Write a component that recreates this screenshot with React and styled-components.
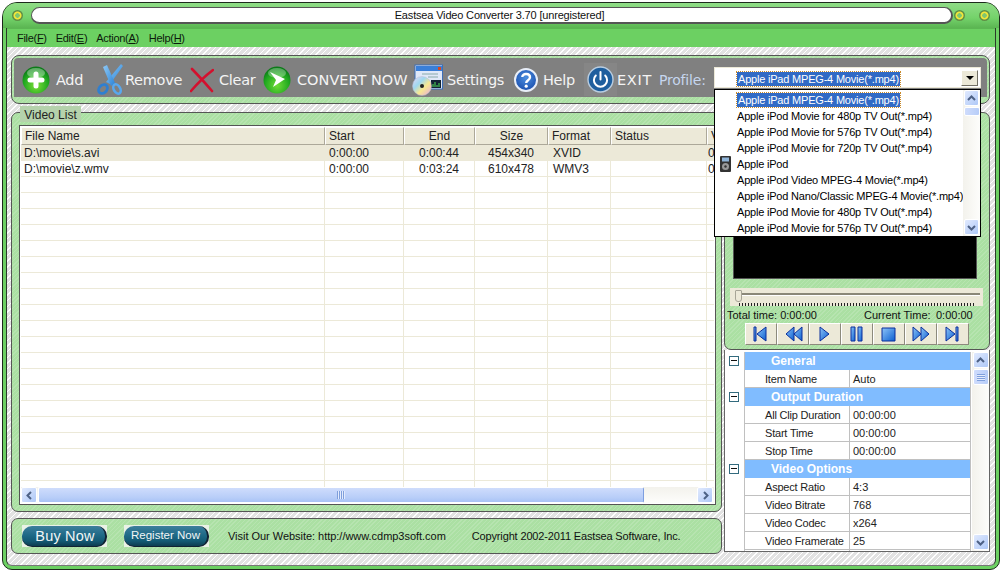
import React from 'react';
import styled, { createGlobalStyle } from 'styled-components';

const GlobalStyle = createGlobalStyle`
  html, body {
    margin: 0;
    padding: 0;
    background: #fff;
  }
  body {
    font-family: 'Liberation Sans', Arial, sans-serif;
    font-size: 11px;
    color: #000;
  }
  * {
    box-sizing: border-box;
  }
`;

const GREEN_TEXTURE = `
  repeating-linear-gradient(135deg, rgba(255,255,255,.14) 0 1px, transparent 1px 3px),
  #abe0a3
`;

const Page = styled.div`
  width: 1002px;
  height: 574px;
  padding: 2px 2px 4px;
  overflow: hidden;
`;

const Frame = styled.div`
  height: 100%;
  display: flex;
  flex-direction: column;
  background: #6cd062;
  border: 1px solid #1d2a1c;
  border-radius: 15px 15px 10px 10px;
  padding: 0 3px 3px;
`;

const TitleBar = styled.div`
  height: 25px;
  flex: none;
  display: flex;
  align-items: center;
  padding: 0 6px 1px 9px;
  background: linear-gradient(#8fdc86, #74d26a 60%, #5bb552);
  margin: 0 -3px;
  border-radius: 14px 14px 0 0;
`;

const Knob = styled.span`
  width: 11px;
  height: 11px;
  flex: none;
  border-radius: 50%;
  background: radial-gradient(circle, #7fc76f 0 2px, #f2e63a 2.5px 3.5px, #5f8f45 4.5px);
  margin-left: ${({ $left }) => $left || 0}px;
`;

const TitlePill = styled.div`
  width: 922px;
  height: 17px;
  margin-left: 8px;
  padding-left: 16px;
  flex: none;
  background: #fff;
  border: 1px solid #555;
  border-right-width: 2px;
  border-bottom-width: 2px;
  border-radius: 9px;
  text-align: center;
  line-height: 15px;
  letter-spacing: -0.17px;
  color: #111;
`;

const Body = styled.div`
  flex: 1;
  min-height: 0;
  display: flex;
  flex-direction: column;
  border: 1px solid #2c3a2b;
  border-bottom-color: #777;
  border-radius: 0 0 6px 6px;
  background:
    repeating-linear-gradient(135deg, #fff 0 1px, transparent 1px 4px),
    #e2e2e2;
`;

const MenuBar = styled.div`
  height: 19px;
  flex: none;
  display: flex;
  align-items: center;
  background: #6cd062;
  border-top: 1px solid #5cb653;
  padding-left: 10px;
  color: #0c1a0c;
  margin-top: -1px;
  letter-spacing: -0.3px;
`;

const MenuItem = styled.span`
  margin-right: ${({ $gap }) => $gap}px;
`;

const Content = styled.div`
  position: relative;
  flex: 1;
  min-height: 0;
  padding: 8px 5px 0 4px;
  display: flex;
  flex-direction: column;
  gap: 8px;
`;

const Toolbar = styled.div`
  height: 49px;
  flex: none;
  background: ${GREEN_TEXTURE};
  border: 1px solid #555;
  border-radius: 8px;
  padding: 2px 2px 6px 2px;
`;

const ToolbarInner = styled.div`
  height: 100%;
  background: #808080;
  border-radius: 4px 4px 0 0;
  display: flex;
  align-items: center;
  padding: 4px 0 0 8px;
`;

const ToolButton = styled.div`
  display: flex;
  align-items: center;
  width: ${({ $width }) => $width}px;
  flex: none;
`;

const ToolLabel = styled.span`
  font-family: 'DejaVu Sans', Verdana, sans-serif;
  font-size: 14.5px;
  color: #f4f4f4;
  margin-left: ${({ $gap }) => $gap}px;
  white-space: nowrap;
  letter-spacing: ${({ $track }) => $track}px;
`;

const ProfileLabel = styled(ToolLabel)`
  color: #c6d6ee;
  font-size: 14px;
  width: 55px;
  flex: none;
  margin-left: 0;
  letter-spacing: -0.2px;
`;

const ExitBox = styled.div`
  display: flex;
  background: #868686;
  padding: 3px;
  margin: -3px;
`;

const Combo = styled.div`
  width: 267px;
  height: 21px;
  margin-top: -4px;
  flex: none;
  background: #fff;
  border: 1px solid #ece9d8;
  display: flex;
  align-items: center;
  padding: 3px 0 0 22px;
  position: relative;
  letter-spacing: -0.2px;
`;

const SelectedText = styled.span`
  background: #316ac5;
  color: #fff;
  line-height: 14px;
  padding: 0 1px;
  outline: 1px dotted #c98a2a;
  outline-offset: 0;
`;

const ComboArrow = styled.div`
  position: absolute;
  right: 2px;
  top: 2px;
  width: 17px;
  height: 16px;
  background: #ece9d8;
  border: 1px solid;
  border-color: #fff #716f64 #716f64 #fff;
  display: flex;
  align-items: center;
  justify-content: center;
  &::before {
    content: '';
    border: 4px solid transparent;
    border-top: 4px solid #000;
    border-bottom: 0;
  }
`;

const DropList = styled.div`
  position: absolute;
  left: 707px;
  top: 42px;
  width: 267px;
  height: 148px;
  background: #fff;
  border: 1px solid #000;
  z-index: 5;
  display: flex;
  letter-spacing: -0.2px;
`;

const DropItems = styled.div`
  flex: 1;
  overflow: hidden;
  padding-top: 2px;
`;

const DropRow = styled.div`
  height: 16px;
  display: flex;
  align-items: center;
  padding-left: 22px;
  position: relative;
  white-space: nowrap;
`;

const DropIcon = styled.svg`
  position: absolute;
  left: 5px;
  top: 0;
`;

const Columns = styled.div`
  flex: 1;
  min-height: 0;
  display: flex;
  gap: 2px;
`;

const LeftColumn = styled.div`
  width: 711px;
  flex: none;
  display: flex;
  flex-direction: column;
  gap: 6px;
`;

const RightColumn = styled.div`
  width: 266px;
  flex: none;
  display: flex;
  flex-direction: column;
`;

const ListPanel = styled.div`
  position: relative;
  height: 400px;
  flex: none;
  background: ${GREEN_TEXTURE};
  border: 1px solid #555;
  border-radius: 7px;
  padding: 12px 5px 0 7px;
`;

const Legend = styled.div`
  position: absolute;
  left: 8px;
  top: -7px;
  height: 16px;
  width: 61px;
  background: #b5d2ac;
  text-align: center;
  line-height: 18px;
  font-size: 12px;
  color: #222;
`;

const ListBox = styled.div`
  height: 380px;
  display: flex;
  flex-direction: column;
  background: #fff;
  border: 1px solid #555;
  padding: 1px;
  overflow: hidden;
`;

const Row = styled.div`
  display: grid;
  grid-template-columns: 304px 79px 71px 73px 63px 96px 40px;
  flex: none;
  height: ${({ $head }) => ($head ? 18 : 16)}px;
  background: ${({ $active }) => ($active ? '#ece9d8' : 'transparent')};
  border-bottom: ${({ $head }) => ($head ? '0' : '1px solid #ece9d8')};
`;

const HeadCell = styled.div`
  background: #ece9d8;
  border: 1px solid;
  border-color: #fff #aca899 #aca899 #fff;
  line-height: 17px;
  padding: 0 ${({ $center }) => ($center ? 0 : 3)}px;
  text-align: ${({ $center }) => ($center ? 'center' : 'left')};
  white-space: nowrap;
  overflow: hidden;
  font-size: 12px;
  color: #222;
`;

const Cell = styled.div`
  border-right: 1px solid #ece9d8;
  line-height: 15px;
  padding: 1px ${({ $pad }) => $pad}px 0;
  text-align: ${({ $center }) => ($center ? 'center' : 'left')};
  white-space: nowrap;
  overflow: hidden;
  font-size: 12px;
  color: #222;
`;

const RowArea = styled.div`
  flex: 1;
  min-height: 0;
  overflow: hidden;
`;

const HScroll = styled.div`
  height: 16px;
  flex: none;
  display: flex;
  background: linear-gradient(#f3f2ec, #fdfdfb);
  padding-right: 1px;
`;

const ScrollBtn = styled.div`
  width: ${({ $w }) => $w || 16}px;
  height: ${({ $h }) => $h || 16}px;
  flex: none;
  background: linear-gradient(135deg, #e1eafe, #aec8f7);
  border: 1px solid #fff;
  border-radius: 2px;
  display: flex;
  align-items: center;
  justify-content: center;
`;

const HThumb = styled.div`
  width: 606px;
  margin: 0 1px;
  background: linear-gradient(#cfdcfc, #b7cdf8 70%, #a9c2f5);
  border: 1px solid #fff;
  border-right-color: #7e9fe0;
  border-radius: 2px;
  display: flex;
  align-items: center;
  justify-content: center;
  flex: none;
`;

const HTrack = styled.div`
  flex: 1;
`;

const Footer = styled.div`
  height: 36px;
  flex: none;
  background: ${GREEN_TEXTURE};
  border: 1px solid #555;
  border-radius: 7px;
  display: flex;
  align-items: center;
  padding-left: 10px;
  color: #111;
`;

const PillWrap = styled.div`
  width: 85px;
  height: 22px;
  background: #e9f2e6;
  display: flex;
  align-items: center;
  justify-content: center;
  margin-right: ${({ $gap }) => $gap}px;
  flex: none;
`;

const Pill = styled.div`
  width: 85px;
  height: 21px;
  border-radius: 10px;
  background: linear-gradient(#3d7f9c, #1f6a87 45%, #135a74 75%, #0d3c50);
  border-right: 2px solid #123;
  border-bottom: 1px solid #123;
  color: #f2f6f6;
  text-align: center;
  padding-left: ${({ $big }) => ($big ? 3 : 0)}px;
  line-height: ${({ $big }) => ($big ? 21 : 18)}px;
  font-size: ${({ $big }) => ($big ? 14.5 : 11.5)}px;
  letter-spacing: ${({ $big }) => ($big ? 0.2 : 0)}px;
`;

const FooterText = styled.span`
  margin-right: ${({ $gap }) => $gap}px;
  white-space: nowrap;
  font-size: 11px;
  letter-spacing: ${({ $track }) => $track}px;
`;

const PreviewPanel = styled.div`
  height: 238px;
  flex: none;
  background: ${GREEN_TEXTURE};
  border: 1px solid #555;
  border-radius: 7px;
  padding: 12px 5px 0 5px;
  display: flex;
  flex-direction: column;
`;

const Screen = styled.div`
  height: 154px;
  margin: 0 7px 0 3px;
  flex: none;
  background: #000;
  border: 1px solid #555;
`;

const Slider = styled.div`
  position: relative;
  height: 18px;
  margin-top: 9px;
  background: #ece9d8;
  flex: none;
  width: 253px;
`;

const SliderTrack = styled.div`
  position: absolute;
  left: 5px;
  right: 3px;
  top: 5px;
  height: 3px;
  background: #8a8878;
  border-bottom: 1px solid #fff;
`;

const SliderTicks = styled.div`
  position: absolute;
  left: 9px;
  right: 8px;
  bottom: 0;
  height: 3px;
  background: repeating-linear-gradient(90deg, #222 0 1px, transparent 1px 3px);
`;

const SliderThumb = styled.div`
  position: absolute;
  left: 5px;
  top: 2px;
  width: 7px;
  height: 12px;
  background: #ece9d8;
  border: 1px solid #a7a597;
  border-radius: 1px 1px 3px 3px;
`;

const TimeRow = styled.div`
  display: flex;
  height: 14px;
  margin-top: 2px;
  flex: none;
  line-height: 14px;
  font-size: 11px;
  color: #111;
  margin-left: -3px;
`;

const TimeText = styled.span`
  width: ${({ $w }) => $w}px;
  white-space: nowrap;
`;

const MediaRow = styled.div`
  display: flex;
  margin: 1px 0 0 15px;
  flex: none;
`;

const MediaButton = styled.div`
  width: 32px;
  height: 22px;
  background: #ece9d8;
  border: 1px solid;
  border-color: #fff #8c8a7c #8c8a7c #fff;
  display: flex;
  align-items: center;
  justify-content: center;
`;

const PropPanel = styled.div`
  height: 202px;
  flex: none;
  display: flex;
  background: #fff;
  border: 1px solid #666;
  border-top: 0;
  padding: 2px 1px 0;
  overflow: hidden;
`;

const PropGutter = styled.div`
  width: 18px;
  flex: none;
`;

const GutterSlot = styled.div`
  height: 18px;
  display: flex;
  align-items: center;
  justify-content: center;
`;

const MinusBox = styled.div`
  width: 10px;
  height: 10px;
  border: 1px solid #336b7e;
  position: relative;
  margin-left: -2px;
  &::before {
    content: '';
    position: absolute;
    left: 1px;
    right: 1px;
    top: 3px;
    height: 1px;
    background: #111;
  }
`;

const PropGrid = styled.div`
  width: 227px;
  flex: none;
  display: flex;
  flex-direction: column;
  border-left: 1px solid #c0c0c0;
  border-right: 1px solid #c0c0c0;
`;

const SectionRow = styled.div`
  height: 18px;
  flex: none;
  background: #80bcff;
  color: #fff;
  font-weight: 700;
  line-height: 19px;
  padding-left: 26px;
  font-size: 12px;
`;

const PropRow = styled.div`
  height: 18px;
  flex: none;
  display: grid;
  grid-template-columns: 105px 1fr;
  border-bottom: 1px solid #c0c0c0;
  line-height: 19px;
  font-size: 11px;
  color: #222;
`;

const PropName = styled.div`
  padding-left: 20px;
  border-right: 1px solid #c0c0c0;
  white-space: nowrap;
  overflow: hidden;
  letter-spacing: -0.2px;
`;

const PropValue = styled.div`
  padding-left: 3px;
`;

const VScroll = styled.div`
  width: 17px;
  margin-left: 1px;
  flex: none;
  display: flex;
  flex-direction: column;
  align-items: center;
  background: linear-gradient(90deg, #f3f2ec, #fdfdfb);
  padding-bottom: 1px;
`;

const VThumb = styled.div`
  width: 16px;
  height: ${({ $h }) => $h}px;
  margin-top: 1px;
  background: linear-gradient(90deg, #cfdcfc, #b7cdf8);
  border: 1px solid #fff;
  border-radius: 2px;
  display: flex;
  align-items: center;
  justify-content: center;
`;

const VSpacer = styled.div`
  flex: 1;
`;

const Grip = styled.div`
  width: 8px;
  height: 7px;
  background: repeating-linear-gradient(#7f9fdc 0 1px, #e4ecfd 1px 2px);
`;

const HGrip = styled.div`
  width: 8px;
  height: 8px;
  background: repeating-linear-gradient(90deg, #7f9fdc 0 1px, #e4ecfd 1px 2px);
`;

const DropScroll = styled(VScroll)`
  width: 17px;
  margin: 0;
`;

function Chevron({ dir }) {
  const paths = {
    up: 'M2 7 L5.5 3.5 L9 7',
    down: 'M2 4 L5.5 7.5 L9 4',
    left: 'M7 2 L3.5 5.5 L7 9',
    right: 'M4 2 L7.5 5.5 L4 9',
  };
  return (
    <svg width="11" height="11" viewBox="0 0 11 11">
      <path d={paths[dir]} fill="none" stroke="#4d6185" strokeWidth="2" />
    </svg>
  );
}

function AddIcon() {
  return (
    <svg width="28" height="28" viewBox="0 0 28 28">
      <defs>
        <radialGradient id="addG" cx="50%" cy="70%" r="65%">
          <stop offset="0" stopColor="#7fe03a" />
          <stop offset="0.7" stopColor="#1fa81f" />
          <stop offset="1" stopColor="#0c7a18" />
        </radialGradient>
      </defs>
      <circle cx="14" cy="14" r="13.5" fill="url(#addG)" />
      <ellipse cx="14" cy="7" rx="9" ry="5" fill="#fff" opacity="0.35" />
      <path d="M14 8 V20 M8 14 H20" stroke="#fff" strokeWidth="5" strokeLinecap="round" />
    </svg>
  );
}

function ScissorsIcon() {
  return (
    <svg width="27" height="31" viewBox="0 0 27 31">
      <defs>
        <linearGradient id="bladeG" x1="0" y1="0" x2="1" y2="1">
          <stop offset="0" stopColor="#8fcaf6" />
          <stop offset="1" stopColor="#2a83d8" />
        </linearGradient>
      </defs>
      <path d="M24 0 L26 2 L13 20 L9 18 Z" fill="url(#bladeG)" />
      <path d="M6 3 L10 1 L18 19 L14 22 Z" fill="url(#bladeG)" />
      <ellipse cx="6" cy="25" rx="5" ry="3.8" transform="rotate(-45 6 25)" fill="none" stroke="#2f7fd0" strokeWidth="2.8" />
      <ellipse cx="20" cy="25" rx="3.2" ry="5" transform="rotate(-30 20 25)" fill="none" stroke="#58a8ee" strokeWidth="2.6" />
    </svg>
  );
}

function ClearIcon() {
  return (
    <svg width="24" height="26" viewBox="0 0 24 26">
      <path d="M2 2 C8 8 16 17 22 24 M23 3 C15 9 7 17 1 24" fill="none" stroke="#d3102e" strokeWidth="2.6" strokeLinecap="round" />
    </svg>
  );
}

function ConvertIcon() {
  return (
    <svg width="28" height="28" viewBox="0 0 28 28">
      <defs>
        <radialGradient id="convG" cx="50%" cy="70%" r="65%">
          <stop offset="0" stopColor="#70dc38" />
          <stop offset="0.7" stopColor="#1fa81f" />
          <stop offset="1" stopColor="#0c7a18" />
        </radialGradient>
      </defs>
      <circle cx="14" cy="14" r="13.5" fill="url(#convG)" />
      <ellipse cx="14" cy="7" rx="9" ry="5" fill="#fff" opacity="0.3" />
      <path d="M7 6 L22 13 L10 21 L13 14 Z" fill="#fff" />
    </svg>
  );
}

function SettingsIcon() {
  return (
    <svg width="31" height="32" viewBox="0 0 31 32">
      <defs>
        <linearGradient id="cdG" x1="0" y1="0" x2="1" y2="1">
          <stop offset="0" stopColor="#e8d8f8" />
          <stop offset="0.35" stopColor="#9fd8f0" />
          <stop offset="0.6" stopColor="#f8e890" />
          <stop offset="1" stopColor="#e6a8e0" />
        </linearGradient>
      </defs>
      <rect x="3" y="1" width="27.5" height="24" fill="#dfe8f8" stroke="#3d6fb8" />
      <rect x="4" y="2" width="26" height="5" fill="#3a7fd8" />
      <rect x="26" y="3" width="3" height="3" fill="#d84a20" />
      <rect x="19" y="16" width="10" height="8" fill="#123" />
      <path d="M21 23 V20 M23 23 V18 M25 23 V21 M27 23 V19" stroke="#4fe05a" />
      <path d="M10 10 H26 M16 13 H26" stroke="#8aa" />
      <circle cx="10" cy="22" r="9.5" fill="url(#cdG)" stroke="#b8b8d0" strokeWidth="0.5" />
      <circle cx="10" cy="22" r="2" fill="#222" />
    </svg>
  );
}

function HelpIcon() {
  return (
    <svg width="24" height="24" viewBox="0 0 24 24">
      <defs>
        <radialGradient id="helpG" cx="50%" cy="40%" r="60%">
          <stop offset="0" stopColor="#4c8fe0" />
          <stop offset="1" stopColor="#1a4fae" />
        </radialGradient>
      </defs>
      <circle cx="12" cy="12" r="11" fill="url(#helpG)" stroke="#e8eef8" strokeWidth="2" />
      <path d="M8.3 9 C8.3 4.8 16 5 16 9.3 C16 12.3 12.2 12 12.2 15" fill="none" stroke="#fff" strokeWidth="2.4" />
      <circle cx="12.2" cy="18.2" r="1.6" fill="#fff" />
    </svg>
  );
}

function ExitIcon() {
  return (
    <ExitBox>
      <svg width="27" height="27" viewBox="0 0 27 27">
        <circle cx="13.5" cy="13.5" r="12.5" fill="#1f5f9e" stroke="#b9cde0" strokeWidth="1.4" />
        <path d="M8.8 9.5 A6.6 6.6 0 1 0 18.2 9.5" fill="none" stroke="#fff" strokeWidth="2" strokeLinecap="round" />
        <path d="M13.5 6 V13.5" stroke="#fff" strokeWidth="2" strokeLinecap="round" />
      </svg>
    </ExitBox>
  );
}

function IpodIcon() {
  return (
    <DropIcon width="11" height="16" viewBox="0 0 11 16">
      <rect x="0" y="0" width="11" height="16" rx="1" fill="#333" />
      <rect x="2" y="1.5" width="7" height="4" fill="#8fb4d8" />
      <circle cx="5.5" cy="10.5" r="3.5" fill="#999" />
      <circle cx="5.5" cy="10.5" r="1.2" fill="#333" />
    </DropIcon>
  );
}

const MEDIA_PATHS = {
  first: ['M3 2 V16 H5 V2 Z', 'M15 2 V16 L6 9 Z'],
  prev: ['M11 2 V16 L3 9 Z', 'M19 2 V16 L11 9 Z'],
  play: ['M5 2 L14 9 L5 16 Z'],
  pause: ['M4 2 H8 V16 H4 Z', 'M11 2 H15 V16 H11 Z'],
  stop: ['M3 3 H16 V16 H3 Z'],
  next: ['M2 2 L10 9 L2 16 Z', 'M10 2 L18 9 L10 16 Z'],
  last: ['M3 2 L12 9 L3 16 Z', 'M13 2 H15 V16 H13 Z'],
};

function MediaIcon({ name }) {
  return (
    <svg width="20" height="18" viewBox="0 0 20 18">
      <defs>
        <linearGradient id={`media-${name}`} x1="0" y1="0" x2="1" y2="1">
          <stop offset="0" stopColor="#8ec4f8" />
          <stop offset="1" stopColor="#0b5fd0" />
        </linearGradient>
      </defs>
      {MEDIA_PATHS[name].map((d) => (
        <path key={d} d={d} fill={`url(#media-${name})`} stroke="#0a2f9c" strokeWidth="1" />
      ))}
    </svg>
  );
}

const menus = [
  { label: 'File', key: 'F', gap: 9 },
  { label: 'Edit', key: 'E', gap: 9 },
  { label: 'Action', key: 'A', gap: 10 },
  { label: 'Help', key: 'H', gap: 0 },
];

const tools = [
  { label: 'Add', icon: <AddIcon />, labelGap: 6, width: 75, track: -0.3 },
  { label: 'Remove', icon: <ScissorsIcon />, labelGap: 1, width: 93, track: -0.3 },
  { label: 'Clear', icon: <ClearIcon />, labelGap: 5, width: 73, track: -0.3 },
  { label: 'CONVERT NOW', icon: <ConvertIcon />, labelGap: 6, width: 149, track: 0 },
  { label: 'Settings', icon: <SettingsIcon />, labelGap: 4, width: 102, track: -0.3 },
  { label: 'Help', icon: <HelpIcon />, labelGap: 5, width: 73, track: -0.3 },
  { label: 'EXIT', icon: <ExitIcon />, labelGap: 3, width: 72, track: 0.7 },
];

const profiles = [
  'Apple iPad MPEG-4 Movie(*.mp4)',
  'Apple iPod Movie for 480p TV Out(*.mp4)',
  'Apple iPod Movie for 576p TV Out(*.mp4)',
  'Apple iPod Movie for 720p TV Out(*.mp4)',
  'Apple iPod',
  'Apple iPod Video MPEG-4 Movie(*.mp4)',
  'Apple iPod Nano/Classic MPEG-4 Movie(*.mp4)',
  'Apple iPod Movie for 480p TV Out(*.mp4)',
  'Apple iPod Movie for 576p TV Out(*.mp4)',
];

const videos = [
  ['D:\\movie\\s.avi', '0:00:00', '0:00:44', '454x340', 'XVID', '', '0'],
  ['D:\\movie\\z.wmv', '0:00:00', '0:03:24', '610x478', 'WMV3', '', '0'],
];

const columns = [
  { title: 'File Name', pad: 3 },
  { title: 'Start', pad: 4 },
  { title: 'End', center: true },
  { title: 'Size', center: true },
  { title: 'Format', pad: 5 },
  { title: 'Status', pad: 5 },
  { title: 'V', pad: 1 },
];

const properties = [
  { section: 'General' },
  { name: 'Item Name', value: 'Auto' },
  { section: 'Output Duration' },
  { name: 'All Clip Duration', value: '00:00:00' },
  { name: 'Start Time', value: '00:00:00' },
  { name: 'Stop Time', value: '00:00:00' },
  { section: 'Video Options' },
  { name: 'Aspect Ratio', value: '4:3' },
  { name: 'Video Bitrate', value: '768' },
  { name: 'Video Codec', value: 'x264' },
  { name: 'Video Framerate', value: '25' },
];

const emptyRows = Array.from({ length: 20 }, (_, i) => i);

export default function App() {
  return (
    <Page>
      <GlobalStyle />
      <Frame>
        <TitleBar>
          <Knob />
          <TitlePill>Eastsea Video Converter 3.70 [unregistered]</TitlePill>
          <Knob $left={1} />
          <Knob $left={14} />
        </TitleBar>
        <Body>
          <MenuBar>
            {menus.map((m) => (
              <MenuItem key={m.label} $gap={m.gap}>
                {m.label}(<u>{m.key}</u>)
              </MenuItem>
            ))}
          </MenuBar>
          <Content>
            <Toolbar>
              <ToolbarInner>
                {tools.map((t) => (
                  <ToolButton key={t.label} $width={t.width}>
                    {t.icon}
                    <ToolLabel $gap={t.labelGap} $track={t.track}>{t.label}</ToolLabel>
                  </ToolButton>
                ))}
                <ProfileLabel>Profile:</ProfileLabel>
                <Combo>
                  <SelectedText>{profiles[0]}</SelectedText>
                  <ComboArrow />
                </Combo>
              </ToolbarInner>
            </Toolbar>
            <DropList>
              <DropItems>
                {profiles.map((p, i) => (
                  <DropRow key={`${p}-${i}`}>
                    {p === 'Apple iPod' && <IpodIcon />}
                    {i === 0 ? <SelectedText>{p}</SelectedText> : p}
                  </DropRow>
                ))}
              </DropItems>
              <DropScroll>
                <ScrollBtn $w={15} $h={16}><Chevron dir="up" /></ScrollBtn>
                <VThumb $h={9} />
                <VSpacer />
                <ScrollBtn $w={15} $h={16}><Chevron dir="down" /></ScrollBtn>
              </DropScroll>
            </DropList>
            <Columns>
              <LeftColumn>
                <ListPanel>
                  <Legend>Video List</Legend>
                  <ListBox>
                    <Row $head>
                      {columns.map((c) => (
                        <HeadCell key={c.title} $center={c.center}>{c.title}</HeadCell>
                      ))}
                    </Row>
                    <RowArea>
                      {videos.map((v, i) => (
                        <Row key={v[0]} $active={i === 0}>
                          {v.map((text, j) => (
                            <Cell key={columns[j].title} $pad={columns[j].pad || 0} $center={columns[j].center}>
                              {text}
                            </Cell>
                          ))}
                        </Row>
                      ))}
                      {emptyRows.map((r) => (
                        <Row key={r}>
                          {columns.map((c) => (
                            <Cell key={c.title} $pad={0} />
                          ))}
                        </Row>
                      ))}
                    </RowArea>
                    <HScroll>
                      <ScrollBtn><Chevron dir="left" /></ScrollBtn>
                      <HThumb><HGrip /></HThumb>
                      <HTrack />
                      <ScrollBtn><Chevron dir="right" /></ScrollBtn>
                    </HScroll>
                  </ListBox>
                </ListPanel>
                <Footer>
                  <PillWrap $gap={17}><Pill $big>Buy Now</Pill></PillWrap>
                  <PillWrap $gap={19}><Pill>Register Now</Pill></PillWrap>
                  <FooterText $gap={26} $track={-0.03}>Visit Our Website: http://www.cdmp3soft.com</FooterText>
                  <FooterText $gap={0} $track={-0.15}>Copyright 2002-2011 Eastsea Software, Inc.</FooterText>
                </Footer>
              </LeftColumn>
              <RightColumn>
                <PreviewPanel>
                  <Screen />
                  <Slider>
                    <SliderTrack />
                    <SliderTicks />
                    <SliderThumb />
                  </Slider>
                  <TimeRow>
                    <TimeText $w={137}>Total time: 0:00:00</TimeText>
                    <TimeText $w={72}>Current Time:</TimeText>
                    <TimeText $w={40}>0:00:00</TimeText>
                  </TimeRow>
                  <MediaRow>
                    {Object.keys(MEDIA_PATHS).map((name) => (
                      <MediaButton key={name}><MediaIcon name={name} /></MediaButton>
                    ))}
                  </MediaRow>
                </PreviewPanel>
                <PropPanel>
                  <PropGutter>
                    {properties.map((p) => (
                      <GutterSlot key={p.section || p.name}>
                        {p.section && <MinusBox />}
                      </GutterSlot>
                    ))}
                  </PropGutter>
                  <PropGrid>
                    {properties.map((p) =>
                      p.section ? (
                        <SectionRow key={p.section}>{p.section}</SectionRow>
                      ) : (
                        <PropRow key={p.name}>
                          <PropName>{p.name}</PropName>
                          <PropValue>{p.value}</PropValue>
                        </PropRow>
                      )
                    )}
                  </PropGrid>
                  <VScroll>
                    <ScrollBtn><Chevron dir="up" /></ScrollBtn>
                    <VThumb $h={16}><Grip /></VThumb>
                    <VSpacer />
                    <ScrollBtn><Chevron dir="down" /></ScrollBtn>
                  </VScroll>
                </PropPanel>
              </RightColumn>
            </Columns>
          </Content>
        </Body>
      </Frame>
    </Page>
  );
}
